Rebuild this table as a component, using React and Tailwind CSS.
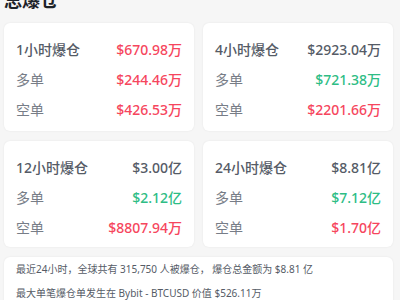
const cards = [
  {
    title: "1小时爆仓",
    total: "$670.98万",
    totalClass: "text-[#f6465d]",
    long: "$244.46万",
    longClass: "text-[#f6465d]",
    short: "$426.53万",
  },
  {
    title: "4小时爆仓",
    total: "$2923.04万",
    totalClass: "text-[#555b66]",
    long: "$721.38万",
    longClass: "text-[#2ebd85]",
    short: "$2201.66万",
  },
  {
    title: "12小时爆仓",
    total: "$3.00亿",
    totalClass: "text-[#555b66]",
    long: "$2.12亿",
    longClass: "text-[#2ebd85]",
    short: "$8807.94万",
  },
  {
    title: "24小时爆仓",
    total: "$8.81亿",
    totalClass: "text-[#555b66]",
    long: "$7.12亿",
    longClass: "text-[#2ebd85]",
    short: "$1.70亿",
  },
];

function Row({ label, value, valueClass, strong }) {
  return (
    <div className="flex h-[30px] items-center justify-between">
      <span className={strong ? "text-[#555b66] font-medium" : "text-[#777d87]"}>{label}</span>
      <span className={"font-medium " + valueClass}>{value}</span>
    </div>
  );
}

function StatCard({ card, first }) {
  return (
    <div
      className={
        "rounded-md bg-white px-3 shadow-[0_0_2px_rgba(0,0,0,0.08)] " +
        (first ? "pt-[11px] pb-[7px]" : "pt-[11px] pb-[5px]")
      }
    >
      <Row label={card.title} value={card.total} valueClass={card.totalClass} strong />
      <Row label="多单" value={card.long} valueClass={card.longClass} />
      <Row label="空单" value={card.short} valueClass="text-[#f6465d]" />
    </div>
  );
}

export default function App() {
  return (
    <div
      className="h-[300px] w-[400px] overflow-hidden bg-[#f6f6f6] text-[14px]"
      style={{ fontFamily: '"Noto Sans", "Noto Sans CJK SC", sans-serif' }}
    >
      <div className="-mt-[12px] pl-1 pr-[7px]">
        <h2 className="h-[24px] text-[18px] font-bold leading-[24px] text-[#1e2329]">总爆仓</h2>
        <div className="mt-[11px] grid grid-cols-2 gap-x-[9px] gap-y-[10px]">
          {cards.map((c, i) => (
            <StatCard key={c.title} card={c} first={i < 2} />
          ))}
        </div>
        <div className="mt-[10px] rounded-md bg-white px-3 pt-0 pb-3 text-[10px] leading-[24px] text-[#555b66] shadow-[0_0_2px_rgba(0,0,0,0.08)]">
          <p className="whitespace-nowrap">最近24小时，全球共有 315,750 人被爆仓， 爆仓总金额为 $8.81 亿</p>
          <p className="whitespace-nowrap">最大单笔爆仓单发生在 Bybit - BTCUSD 价值 $526.11万</p>
        </div>
      </div>
    </div>
  );
}
